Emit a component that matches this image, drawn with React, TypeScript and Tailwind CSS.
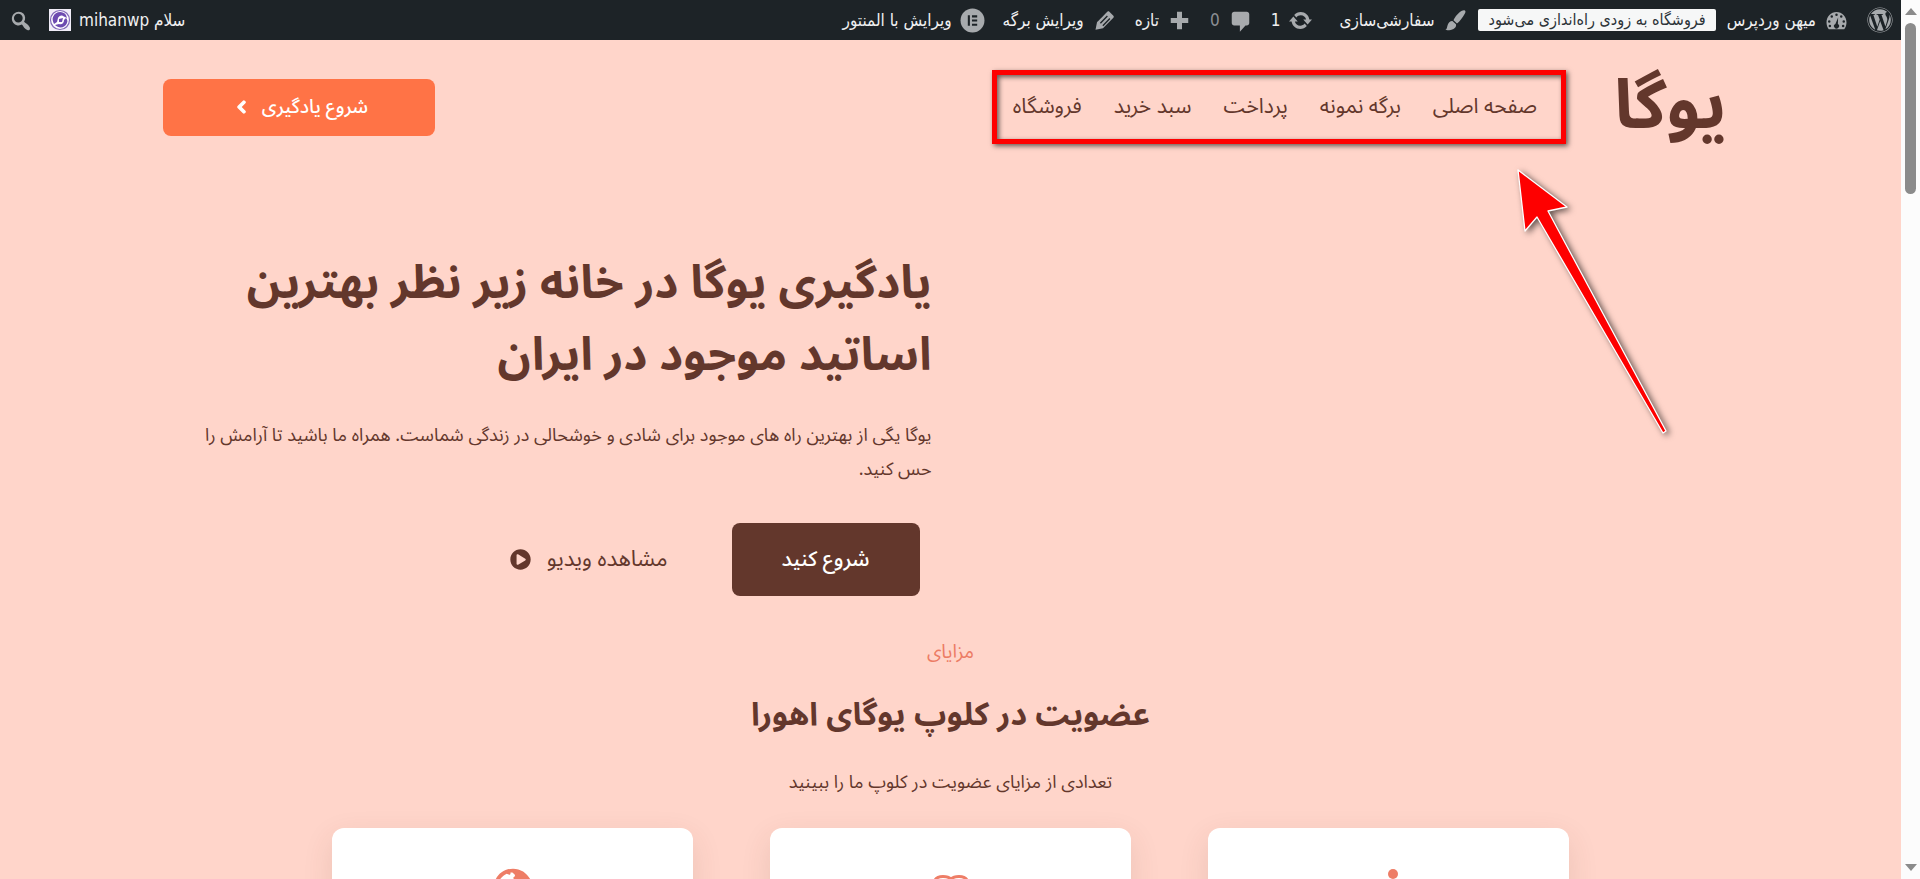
import type { ReactNode } from "react";
import { FaChevronLeft, FaGlobeAmericas, FaPlayCircle, FaWordpress } from "react-icons/fa";

const navLinks = ["صفحه اصلی", "برگه نمونه", "پرداخت", "سبد خرید", "فروشگاه"];

function DashIcon({ d }: { d: string }) {
  return (
    <svg viewBox="0 0 20 20" className="h-[25px] w-[25px] shrink-0 fill-[#a7aaad]" aria-hidden="true">
      <path d={d} fillRule="evenodd" />
    </svg>
  );
}

function ElementorIcon() {
  return (
    <svg viewBox="0 0 24 24" className="h-[25px] w-[25px] shrink-0" aria-hidden="true">
      <circle cx="12" cy="12" r="11.5" fill="#a7aaad" />
      <path d="M7.5 7h2v10h-2zM11.5 7h5v2h-5zM11.5 11h5v2h-5zM11.5 15h5v2h-5z" fill="#1d2327" />
    </svg>
  );
}

function Avatar() {
  return (
    <svg viewBox="0 0 22 22" className="h-[22px] w-[22px] shrink-0" aria-hidden="true">
      <rect width="22" height="22" fill="#f1edf8" />
      <circle cx="11" cy="11" r="9.5" fill="#fff" stroke="#8268b8" strokeWidth="1.2" />
      <path d="M4 8c2-5 9-7 13-2l1 3-4-2c-2-1-4 0-5 2l-1 4-3 2c-1-2-2-5-1-7z" fill="#6d4bb0" />
      <path d="M6 16c4 4 10 3 12-2 1-2 0-4-1-5l-2 2c0 3-2 5-5 4z" fill="#6d4bb0" />
      <path d="M10 10l4-1-1 4-3 0z" fill="#6d4bb0" />
    </svg>
  );
}

type BarItemProps = { icon: ReactNode; label: string; muted?: boolean };

function BarItem({ icon, label, muted }: BarItemProps) {
  return (
    <a href="#" className={`flex items-center gap-2 ${muted ? "text-[#8c8f94]" : ""}`}>
      {icon}
      {label}
    </a>
  );
}

// dashicons glyphs, 20 x 20 grid
const icons = {
  dashboard:
    "M3.8 17h12.4c1.1-1.6 1.8-3.5 1.8-5.5C18 6.8 14.4 3.25 10 3.25S2 6.8 2 11.5c0 2 .7 3.9 1.8 5.5zM10 4.4a1 1 0 1 1 0 2 1 1 0 0 1 0-2zM6.2 5.8a1 1 0 1 1 0 2 1 1 0 0 1 0-2zM13.8 5.8a1 1 0 1 1 0 2 1 1 0 0 1 0-2zM4.2 9.7a1 1 0 1 1 0 2 1 1 0 0 1 0-2zM15.8 9.7a1 1 0 1 1 0 2 1 1 0 0 1 0-2zM11.3 7.5l-.2 5.3a2 2 0 1 1-2-.1zM4.7 13.3a1 1 0 1 1 0 2 1 1 0 0 1 0-2zM15.3 13.3a1 1 0 1 1 0 2 1 1 0 0 1 0-2z",
  brush:
    "M18.3 2c.7.5.6 1.4-.1 2.6-1.6 3-4.1 6.3-6.2 7.7l-2.8-2.5c1-2.5 4-5.9 6.7-7.5 1-.6 1.800-.8 2.400-.3zM8.300 10.300l2.900 2.700c.4 1.400-.4 3-2 3.800-1.700.9-4 1.100-6.500.9 1.300-1 1.300-2.200 1.700-3.700.5-2 2-3.700 3.900-3.700z",
  update:
    "M10.2 3.28c3.53 0 6.43 2.61 6.92 6h2.08l-3.5 4-3.5-4h2.32c-.45-1.97-2.21-3.45-4.32-3.45-1.45 0-2.73.71-3.54 1.78L4.95 5.66C6.23 4.2 8.11 3.28 10.2 3.28zm-.4 13.44c-3.52 0-6.43-2.61-6.92-6H.8l3.5-4 3.5 4H5.48c.45 1.97 2.21 3.45 4.32 3.45 1.45 0 2.73-.71 3.54-1.78l1.71 1.95c-1.28 1.46-3.15 2.38-5.25 2.38z",
  comment: "M5 3h10c1.1 0 2 .9 2 2v7c0 1.1-.9 2-2 2h-1l-4.5 5v-5H5c-1.1 0-2-.9-2-2V5c0-1.1.9-2 2-2z",
  plus: "M17 8v4h-5v5H8v-5H3V8h5V3h4v5h5z",
  edit: "M13.9 2.9l3.2 3.2c.5.5.4 1.2 0 1.6l-8.3 8.4-6 1.2 1.2-6S11.9 3.3 12.3 2.9c.4-.4 1.1-.5 1.6 0zM6.3 11.7l.8.8 5.6-5.7-.8-.8zM8.3 13.7l.8.8 5.6-5.7-.8-.8z",
  search:
    "M12.14 4.18c1.87 1.87 2.11 4.75.72 6.89l1.17.9c.68.46 1.2.9 1.6 1.25 1 1 1.5 1.7 1.8 2.4.3.8.1 1.5-.18 1.81-.5.5-1.2.5-1.8.17-.8-.3-1.5-.8-2.04-1.43-.5-.5-1.2-1.5-1.8-2.37l-.44-.5c-2.07 1.09-4.69.76-6.44-.98-2.14-2.15-2.14-5.64 0-7.78 2.15-2.15 5.63-2.15 7.78 0zm-1.41 6.36c1.36-1.37 1.36-3.58 0-4.95-1.37-1.37-3.59-1.37-4.95 0-1.37 1.37-1.37 3.58 0 4.95 1.36 1.37 3.58 1.37 4.95 0z",
};

function AdminBar() {
  return (
    <header className="flex h-10 items-center justify-between bg-[#1d2327] px-2 font-['DejaVu_Sans_Condensed','DejaVu_Sans',sans-serif] text-[17px] leading-10 whitespace-nowrap text-[#f0f0f1]">
      <div className="flex items-center gap-[18px]">
        <a href="#" aria-label="وردپرس">
          <FaWordpress className="h-[26px] w-[26px] text-[#a7aaad]" />
        </a>
        <div className="flex items-center gap-[11px] pl-2">
          <BarItem icon={<DashIcon d={icons.dashboard} />} label="میهن وردپرس" />
          <a href="#" className="rounded-xs bg-[#f6f7f7] px-[10px] text-[16px] leading-[22px] text-[#2c3338]">
            فروشگاه به زودی راه‌اندازی می‌شود
          </a>
          <BarItem icon={<DashIcon d={icons.brush} />} label="سفارشی‌سازی" />
        </div>
        <BarItem icon={<DashIcon d={icons.update} />} label="1" />
        <BarItem icon={<DashIcon d={icons.comment} />} label="0" muted />
        <BarItem icon={<DashIcon d={icons.plus} />} label="تازه" />
        <BarItem icon={<DashIcon d={icons.edit} />} label="ویرایش برگه" />
        <BarItem icon={<ElementorIcon />} label="ویرایش با المنتور" />
      </div>
      <div className="flex items-center gap-4">
        <a href="#" className="flex items-center gap-2">
          سلام mihanwp
          <Avatar />
        </a>
        <button type="button" aria-label="جستجو">
          <DashIcon d={icons.search} />
        </button>
      </div>
    </header>
  );
}

function SiteHeader() {
  return (
    <div className="mx-auto flex w-full max-w-[1576px] items-center justify-between pt-[30px]">
      <div className="flex items-center gap-12 pr-3">
        <a href="#" className="text-[68px] leading-[74px] font-bold">
          یوگا
        </a>
        <nav className="flex h-[74px] items-center gap-8 border-5 border-[#fe0000] pr-6 pl-4 text-[21px] shadow-[2px_2px_5px_rgba(0,0,0,0.6),inset_2px_2px_5px_rgba(0,0,0,0.6)]">
          {navLinks.map((link) => (
            <a key={link} href="#" className="whitespace-nowrap">
              {link}
            </a>
          ))}
        </nav>
      </div>
      <button
        type="button"
        className="flex h-[57px] w-[272px] items-center justify-center gap-4 rounded-lg bg-[#ff7346] pl-2 text-[19px] font-medium text-white"
      >
        شروع یادگیری
        <FaChevronLeft className="h-[14px] w-[9px]" stroke="currentColor" strokeWidth="50" />
      </button>
    </div>
  );
}

function Hero() {
  return (
    <section className="mx-auto flex w-full max-w-[1576px] justify-end pt-[104px]">
      <div className="w-1/2 px-[19px]">
        <h1 className="text-[46px] leading-[72px] font-bold">
          یادگیری یوگا در خانه زیر نظر بهترین اساتید موجود در ایران
        </h1>
        <p className="mt-[26px] text-[18px] leading-[34px]">
          یوگا یگی از بهترین راه های موجود برای شادی و خوشحالی در زندگی شماست. همراه ما باشید تا آرامش را حس کنید.
        </p>
        <div className="mt-[37px] flex items-center gap-16 pr-3">
          <button type="button" className="h-[73px] w-[188px] rounded-lg bg-[#63372c] text-[21px] font-medium text-white">
            شروع کنید
          </button>
          <a href="#" className="flex items-center gap-4 text-[22px]">
            مشاهده ویدیو
            <FaPlayCircle className="h-[21px] w-[21px]" />
          </a>
        </div>
      </div>
    </section>
  );
}

function PersonIcon() {
  return (
    <svg viewBox="0 0 40 40" className="h-10 w-10" fill="currentColor" aria-hidden="true">
      <circle cx="24" cy="6" r="5" />
      <path d="M18 14h12l5 12-3 1-4-7v8l9 6v3H5v-3l15-6v-8l-4 7-3-1z" />
    </svg>
  );
}

function HeartIcon() {
  return (
    <svg viewBox="0 0 40 40" className="h-10 w-10" fill="none" stroke="currentColor" strokeWidth="3" aria-hidden="true">
      <path d="M20 11c-3-3-13-4-16 1-3 6 1 11 16 24 15-13 19-18 16-24-3-5-13-4-16-1z" />
    </svg>
  );
}

const benefits: { name: string; icon: ReactNode }[] = [
  { name: "person", icon: <PersonIcon /> },
  { name: "heart", icon: <HeartIcon /> },
  { name: "globe", icon: <FaGlobeAmericas className="h-10 w-10" /> },
];

function Benefits() {
  return (
    <section className="mx-auto w-full max-w-[1237px] pt-[39px] text-center">
      <p className="text-[19px] leading-[34px] text-[#ec7c65]">مزایای</p>
      <h2 className="mt-[18px] text-[32px] leading-[56px] font-bold">عضویت در کلوپ یوگای اهورا</h2>
      <p className="mt-[22px] text-[18px] leading-[34px]">تعدادی از مزایای عضویت در کلوپ ما را ببینید</p>
      <div className="mt-[29px] grid grid-cols-3 gap-[77px]">
        {benefits.map((item) => (
          <div
            key={item.name}
            className="flex h-80 justify-center rounded-xl bg-white pt-10 text-[#ee7d66] shadow-[0_10px_30px_rgba(99,55,44,0.12)]"
          >
            {item.icon}
          </div>
        ))}
      </div>
    </section>
  );
}

function Scrollbar() {
  return (
    <div className="flex w-[19px] shrink-0 flex-col items-center bg-[#fcfcfc] py-2" aria-hidden="true">
      <svg viewBox="0 0 12 7" className="h-[7px] w-3 fill-[#8b8b8b]">
        <path d="M6 0l6 7H0z" />
      </svg>
      <div className="mt-2 h-[171px] w-[11px] rounded-full bg-[#8b8b8b]" />
      <svg viewBox="0 0 12 7" className="mt-auto h-[7px] w-3 fill-[#8b8b8b]">
        <path d="M0 0h12L6 7z" />
      </svg>
    </div>
  );
}

// Callout arrow pointing at the menu
function Arrow() {
  return (
    <svg
      viewBox="0 0 190 280"
      className="absolute top-[160px] right-[220px] h-[280px] w-[190px] drop-shadow-[3px_2px_3px_rgba(0,0,0,0.6)]"
      aria-hidden="true"
    >
      <path
        d="M27 10L76 47 57 51 175 271 172 273 46 57 34 71z"
        fill="#fe0000"
        stroke="#fff"
        strokeWidth="1.3"
        strokeLinejoin="round"
      />
    </svg>
  );
}

export default function App() {
  return (
    <div
      dir="rtl"
      className="flex h-screen overflow-hidden bg-[#ffd5ca] font-['Noto_Sans_Arabic','Noto_Sans',sans-serif] text-[#63372c]"
    >
      <Scrollbar />
      <div className="relative min-w-0 flex-1">
        <AdminBar />
        <SiteHeader />
        <Hero />
        <Benefits />
        <Arrow />
      </div>
    </div>
  );
}
